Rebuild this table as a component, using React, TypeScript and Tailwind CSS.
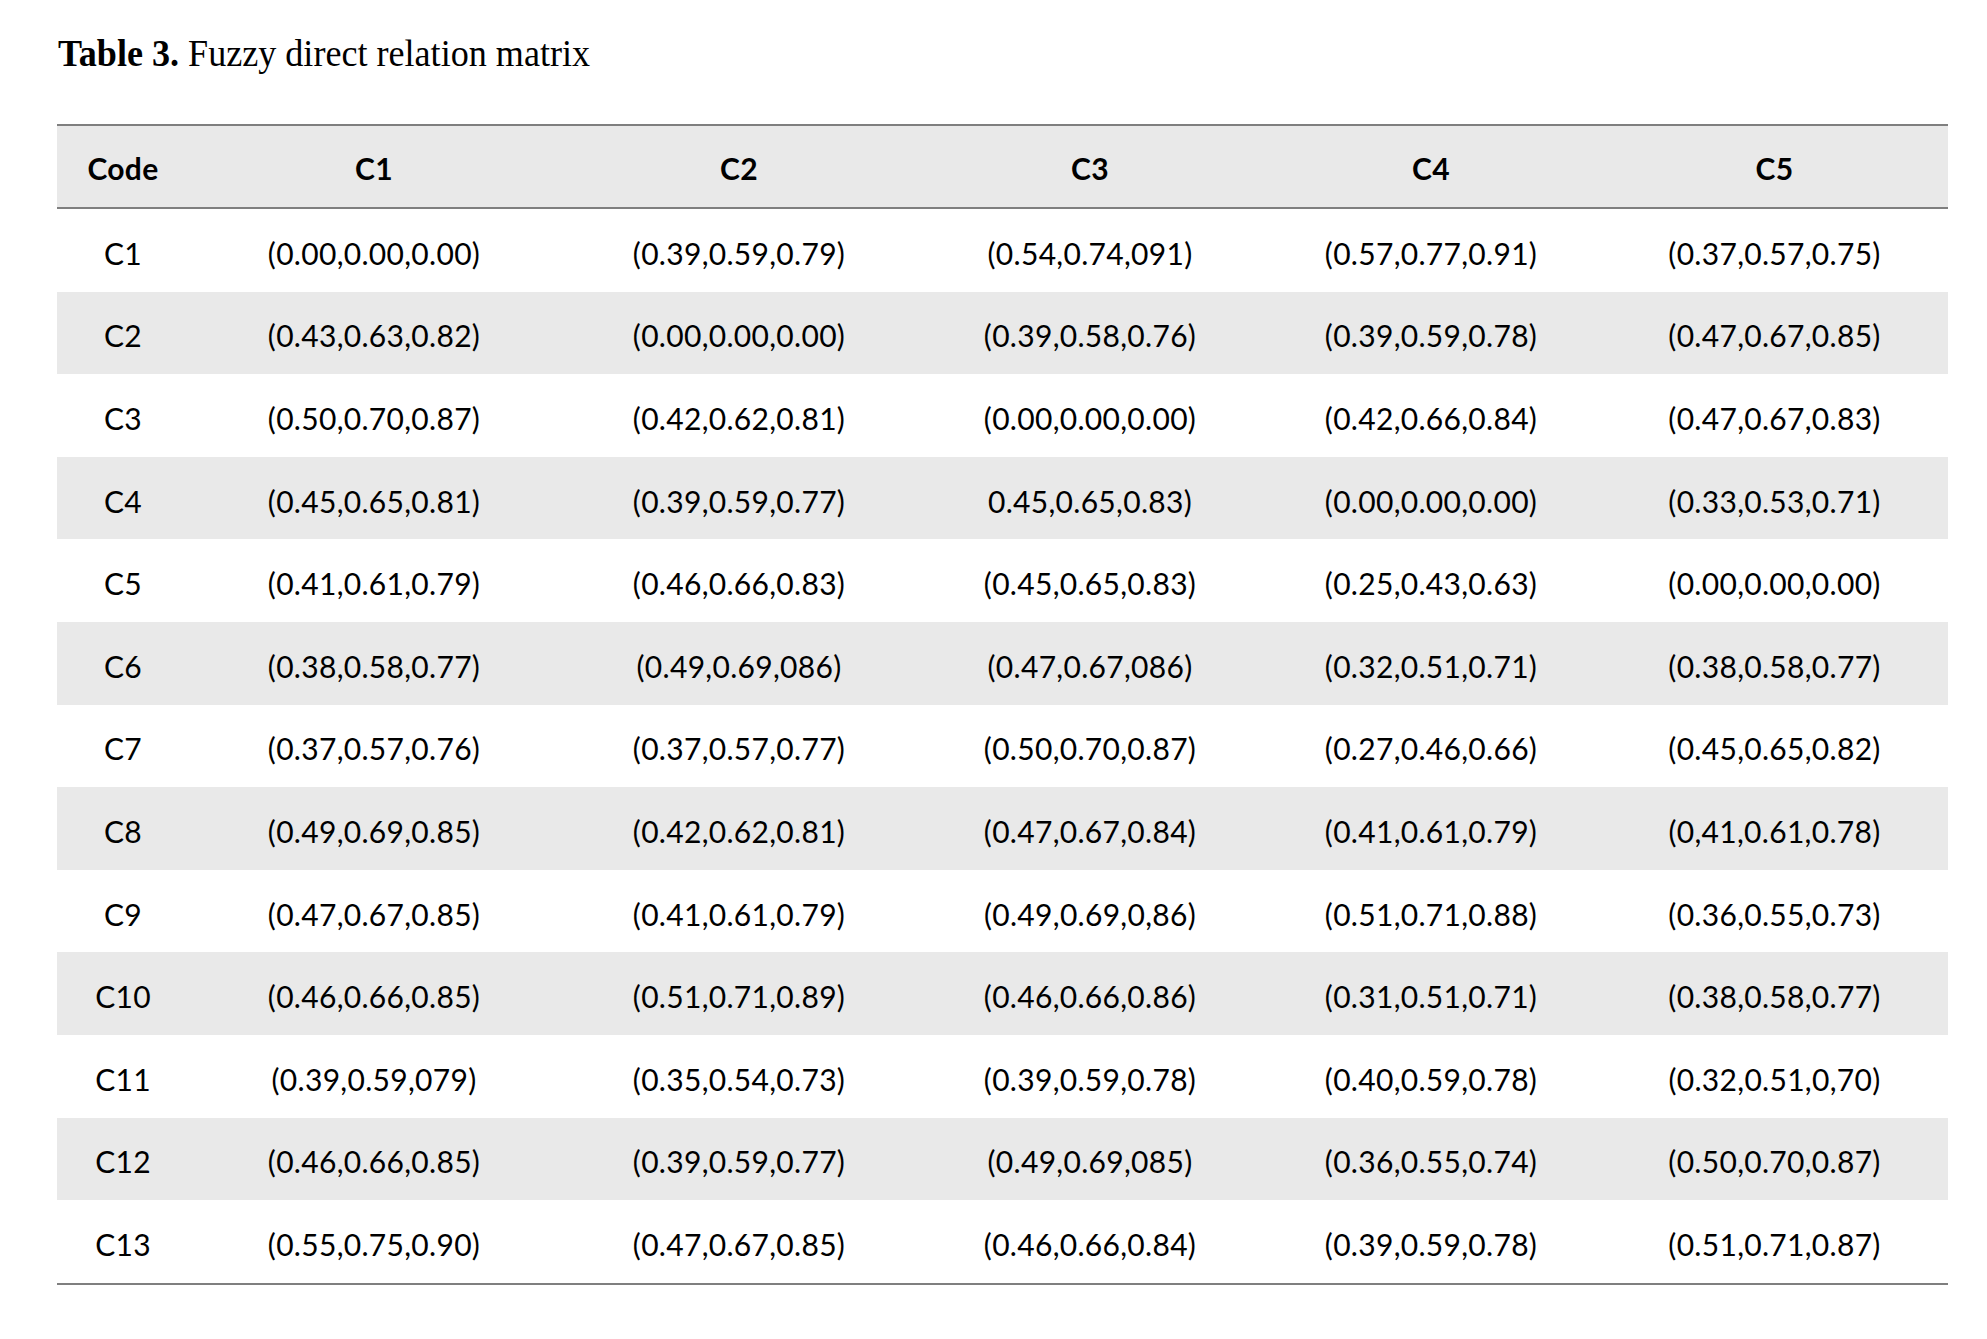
import React from "react";

const cols = ["C1", "C2", "C3", "C4", "C5"];

const rows: [string, string[]][] = [
  ["C1", ["(0.00,0.00,0.00)", "(0.39,0.59,0.79)", "(0.54,0.74,091)", "(0.57,0.77,0.91)", "(0.37,0.57,0.75)"]],
  ["C2", ["(0.43,0.63,0.82)", "(0.00,0.00,0.00)", "(0.39,0.58,0.76)", "(0.39,0.59,0.78)", "(0.47,0.67,0.85)"]],
  ["C3", ["(0.50,0.70,0.87)", "(0.42,0.62,0.81)", "(0.00,0.00,0.00)", "(0.42,0.66,0.84)", "(0.47,0.67,0.83)"]],
  ["C4", ["(0.45,0.65,0.81)", "(0.39,0.59,0.77)", "0.45,0.65,0.83)", "(0.00,0.00,0.00)", "(0.33,0.53,0.71)"]],
  ["C5", ["(0.41,0.61,0.79)", "(0.46,0.66,0.83)", "(0.45,0.65,0.83)", "(0.25,0.43,0.63)", "(0.00,0.00,0.00)"]],
  ["C6", ["(0.38,0.58,0.77)", "(0.49,0.69,086)", "(0.47,0.67,086)", "(0.32,0.51,0.71)", "(0.38,0.58,0.77)"]],
  ["C7", ["(0.37,0.57,0.76)", "(0.37,0.57,0.77)", "(0.50,0.70,0.87)", "(0.27,0.46,0.66)", "(0.45,0.65,0.82)"]],
  ["C8", ["(0.49,0.69,0.85)", "(0.42,0.62,0.81)", "(0.47,0.67,0.84)", "(0.41,0.61,0.79)", "(0,41,0.61,0.78)"]],
  ["C9", ["(0.47,0.67,0.85)", "(0.41,0.61,0.79)", "(0.49,0.69,0,86)", "(0.51,0.71,0.88)", "(0.36,0.55,0.73)"]],
  ["C10", ["(0.46,0.66,0.85)", "(0.51,0.71,0.89)", "(0.46,0.66,0.86)", "(0.31,0.51,0.71)", "(0.38,0.58,0.77)"]],
  ["C11", ["(0.39,0.59,079)", "(0.35,0.54,0.73)", "(0.39,0.59,0.78)", "(0.40,0.59,0.78)", "(0.32,0.51,0,70)"]],
  ["C12", ["(0.46,0.66,0.85)", "(0.39,0.59,0.77)", "(0.49,0.69,085)", "(0.36,0.55,0.74)", "(0.50,0.70,0.87)"]],
  ["C13", ["(0.55,0.75,0.90)", "(0.47,0.67,0.85)", "(0.46,0.66,0.84)", "(0.39,0.59,0.78)", "(0.51,0.71,0.87)"]],
];

const grid = "grid grid-cols-[132px_370px_360px_342px_340px_347px]";

export default function App() {
  return (
    <div className="w-[1987px] h-[1339px] bg-white pt-[34px] pl-[57px] text-black overflow-hidden">
      <div className="ml-[1px] h-[38px] whitespace-nowrap">
        <span
          className="inline-block origin-left scale-x-[0.95] text-[38px] leading-[38px] text-black"
          style={{ fontFamily: '"Liberation Serif", "Times New Roman", serif' }}
        >
          <b className="font-bold">Table 3.</b>{" "}
          <span className="font-normal">Fuzzy direct relation matrix</span>
        </span>
      </div>

      <div
        className="mt-[52px] w-[1891px] text-[30px] tracking-[0.3px]"
        style={{ fontFamily: "Lato, 'Open Sans', sans-serif" }}
      >
        <div className={`${grid} h-[85px] bg-[#e9e9e9] border-t-2 border-b-2 border-[#7f7f7f] font-bold`}>
          <div className="flex items-center justify-center pt-[3px]">Code</div>
          {cols.map((c) => (
            <div key={c} className="flex items-center justify-center pt-[3px]">
              {c}
            </div>
          ))}
        </div>
        <div className="border-b-2 border-[#7f7f7f]">
          {rows.map(([code, vals], i) => (
            <div
              key={code}
              className={`${grid} h-[82.6px] ${i % 2 === 1 ? "bg-[#e9e9e9]" : "bg-white"}`}
            >
              <div className="flex items-center justify-center pt-[6px]">{code}</div>
              {vals.map((v, j) => (
                <div key={j} className="flex items-center justify-center pt-[6px] whitespace-nowrap">
                  {v}
                </div>
              ))}
            </div>
          ))}
        </div>
      </div>
    </div>
  );
}
